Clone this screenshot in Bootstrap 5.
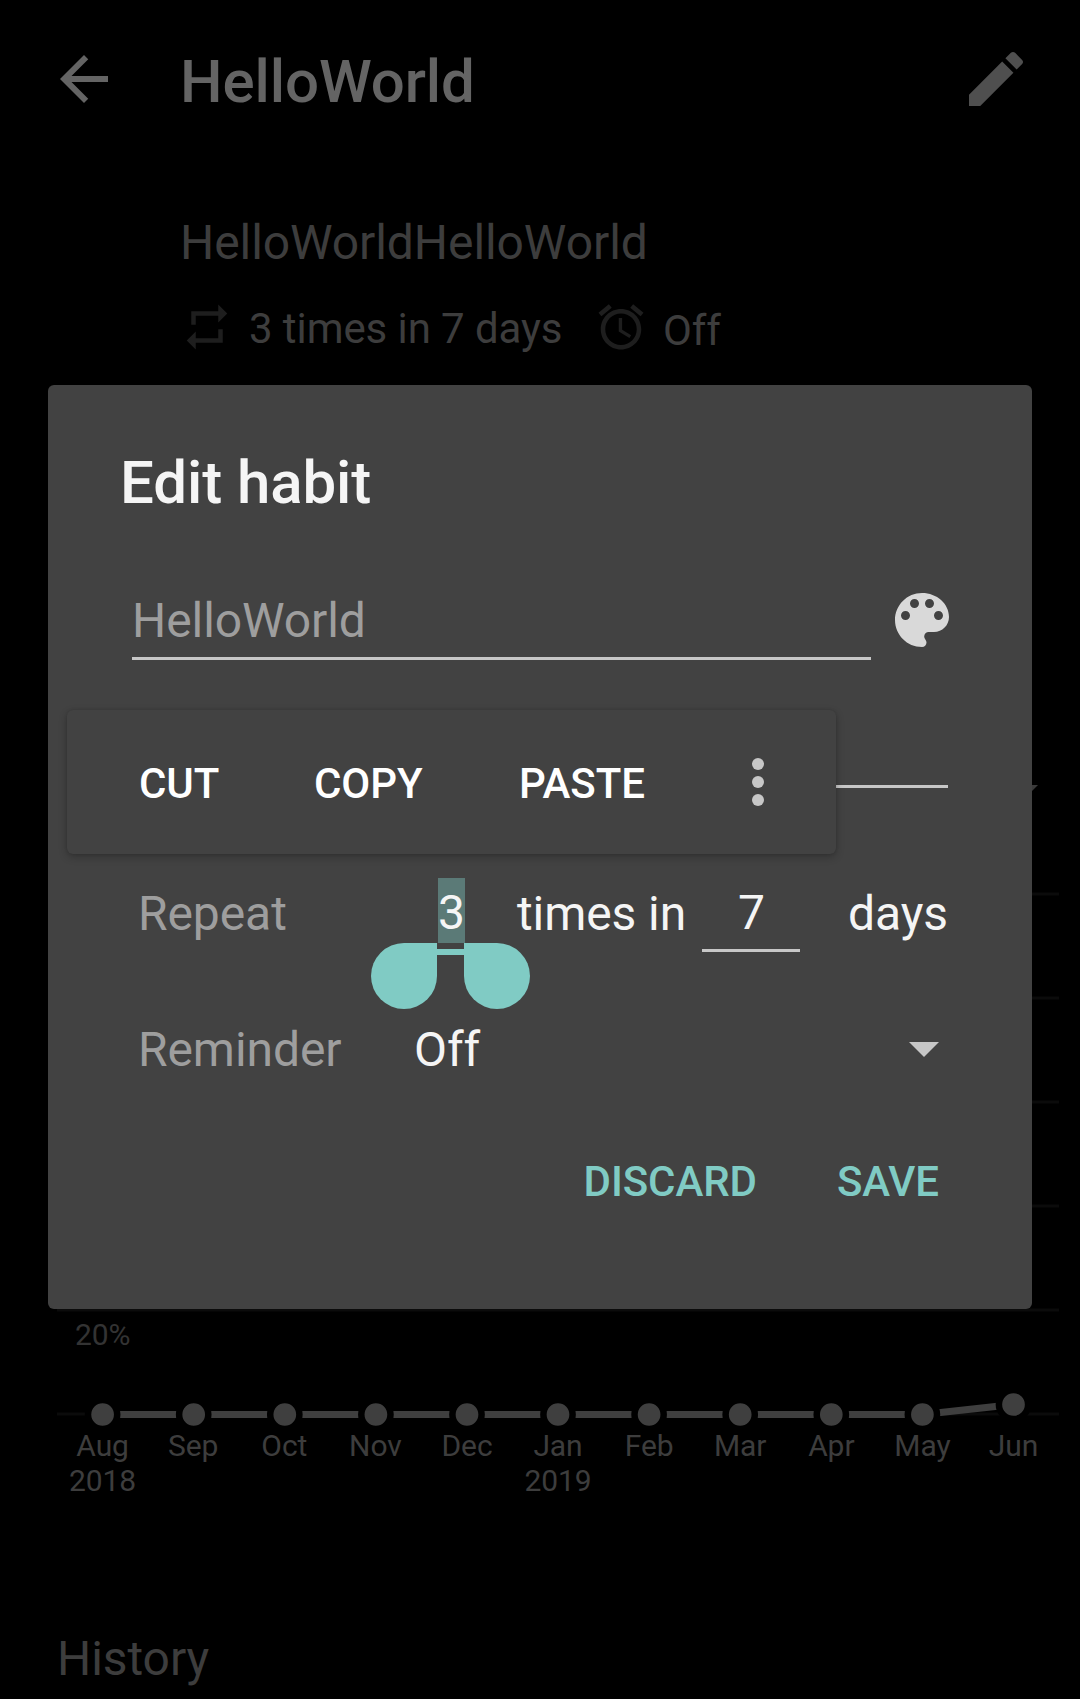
<!DOCTYPE html>
<html lang="en">
<head>
<meta charset="utf-8">
<meta name="viewport" content="width=device-width, initial-scale=1">
<title>Edit habit</title>
<link href="https://cdn.jsdelivr.net/npm/bootstrap@5.3.0/dist/css/bootstrap.min.css" rel="stylesheet">
<script src="https://cdn.jsdelivr.net/npm/bootstrap@5.3.0/dist/js/bootstrap.bundle.min.js"></script>
<style>
body { background: #000; font-family: Roboto, sans-serif; font-size: 48px; letter-spacing: -.08px; color: #3d3d3d; }
.screen { width: 1080px; height: 1699px; background: #000; }
svg { display: block; flex: none; }
.topbar { padding: 43px 48px 0; height: 120px; }
.topbar h1 { font-size: 60px; font-weight: 500; line-height: 77px; color: #646464; margin-left: 60px; }
.about { margin: 94px 0 0 180px; line-height: 57px; }
.meta { margin: 29px 0 0 180px; height: 54px; font-size: 42px; line-height: 57px; white-space: nowrap; }
.meta .freq { margin: 0 31px 0 15px; width: 314px; }
.meta .remind { margin-left: 15px; line-height: 61px; }
.score { margin-top: 346px; }
.score text { font-size: 30px; fill: #3d3d3d; }
.history { margin: 131px 0 0 57px; line-height: 56px; font-size: 48px; font-weight: 400; }

.dialog { left: 48px; top: 385px; width: 984px; height: 924px; padding: 62px 84px 0; border-radius: 6px; background: #424242; color: #f5f5f5; }
.dialog h2 { margin-left: -12px; font-size: 60px; font-weight: 500; line-height: 71px; }
.line-input { border-bottom: 3px solid #c7c7c7; }
.name-row { margin: 66px -10px 0 0; }
.name-input { width: 739px; height: 76px; line-height: 73px; color: #9e9e9e; margin-right: 15px; }
.question-input { height: 128px; }
.form-line { margin-left: 6px; line-height: 71px; white-space: nowrap; }
.repeat-line { margin-top: 90px; height: 74px; }
.reminder-line { margin-top: 62px; height: 71px; }
.reminder-line svg { margin-right: 9px; }
.caption-lbl { color: #9e9e9e; }
.repeat-line .caption-lbl { width: 264px; }
.reminder-line .caption-lbl { width: 276px; }
.num { width: 98px; height: 74px; line-height: 69px; }
.num.focused { width: 99px; height: 77px; border-bottom: 6px solid #80cbc4; }
.num.line-input { padding-left: 1px; }
.picked { width: 27px; height: 65px; background: #5b7a77; }
.handle { top: 65px; width: 66px; height: 66px; background: #80cbc4; }
.handle-l { left: -31px; border-radius: 50% 0 50% 50%; }
.handle-r { left: 62px; border-radius: 0 50% 50% 50%; }
.times { width: 185px; margin-left: 16px; }
.days { margin-left: 48px; }
.actions { margin: 61px 9px 0 0; gap: 80px; font-size: 42px; font-weight: 500; line-height: 71px; color: #80cbc4; }
.clip-menu { left: 19px; top: 325px; width: 769px; height: 144px; padding-left: 72px; border-radius: 6px; background: #424242; color: #fff; font-size: 42px; font-weight: 500; line-height: 147px; box-shadow: 0 3px 8px rgba(0,0,0,.24), 0 0 3px rgba(0,0,0,.14); }
.clip-menu span:nth-child(1) { width: 175px; }
.clip-menu span:nth-child(2) { width: 205px; }
.clip-menu span:nth-child(3) { width: 203px; }
</style>
</head>
<body>
<div class="screen position-relative overflow-hidden">
  <header class="topbar d-flex align-items-start">
    <svg width="72" height="72" viewBox="0 0 24 24" fill="#646464"><path d="M20 11H7.83l5.59-5.59L12 4l-8 8 8 8 1.41-1.41L7.83 13H20v-2z"/></svg>
    <h1 class="mb-0">HelloWorld</h1>
    <svg class="ms-auto" width="72" height="72" viewBox="0 0 24 24" fill="#4f4f4f"><path d="M3 17.25V21h3.75L17.81 9.94l-3.75-3.75L3 17.25zM20.71 7.04c.39-.39.39-1.02 0-1.41l-2.34-2.34c-.39-.39-1.02-.39-1.41 0l-1.83 1.83 3.75 3.75 1.83-1.83z"/></svg>
  </header>
  <main>
    <div class="about">HelloWorldHelloWorld</div>
    <div class="meta d-flex align-items-start">
      <svg width="54" height="54" viewBox="0 0 24 24" fill="#1e1e1e"><path d="M7 7h10v3l4-4-4-4v3H5v6h2V7zm10 10H7v-3l-4 4 4 4v-3h12v-6h-2v4z"/></svg>
      <span class="freq">3 times in 7 days</span>
      <svg width="54" height="54" viewBox="0 0 24 24" fill="#1e1e1e"><path d="M22 5.72l-4.6-3.86-1.29 1.53 4.6 3.86L22 5.72zM7.88 3.39L6.6 1.86 2 5.71l1.29 1.53 4.59-3.85zM12.5 8H11v6l4.75 2.85.75-1.23-4-2.37V8zM12 4c-4.97 0-9 4.03-9 9s4.02 9 9 9c4.97 0 9-4.03 9-9s-4.03-9-9-9zm0 16c-3.87 0-7-3.13-7-7s3.13-7 7-7 7 3.13 7 7-3.13 7-7 7z"/></svg>
      <span class="remind">Off</span>
    </div>
    <svg class="score" width="1080" height="800" viewBox="0 700 1080 800">
      <path d="M1008 785h30l-15 15z" fill="#3a3a3a"/>
      <path d="M57 894H1059M57 998H1059M57 1102H1059M57 1206H1059M57 1310H1059M57 1414H1059" stroke="#0b0b0b" stroke-width="3"/>
      <path d="M102.6 1414.5H922.5L1013.5 1404.5" stroke="#3f3f3f" stroke-width="7" fill="none"/>
      <g fill="#3f3f3f" stroke="#000" stroke-width="6.5">
        <circle cx="102.6" cy="1414.5" r="14.6"/><circle cx="193.7" cy="1414.5" r="14.6"/><circle cx="284.8" cy="1414.5" r="14.6"/><circle cx="375.9" cy="1414.5" r="14.6"/><circle cx="467" cy="1414.5" r="14.6"/><circle cx="558" cy="1414.5" r="14.6"/><circle cx="649.1" cy="1414.5" r="14.6"/><circle cx="740.2" cy="1414.5" r="14.6"/><circle cx="831.3" cy="1414.5" r="14.6"/><circle cx="922.4" cy="1414.5" r="14.6"/><circle cx="1013.5" cy="1404.5" r="14.6"/>
      </g>
      <text x="75" y="1345" style="fill:#333">20%</text>
      <g text-anchor="middle">
        <text x="102.6" y="1456">Aug</text><text x="193.2" y="1456">Sep</text><text x="284.3" y="1456">Oct</text><text x="375.4" y="1456">Nov</text><text x="467" y="1456">Dec</text><text x="558" y="1456">Jan</text><text x="649.1" y="1456">Feb</text><text x="740.2" y="1456">Mar</text><text x="831.3" y="1456">Apr</text><text x="922.4" y="1456">May</text><text x="1013.5" y="1456">Jun</text>
        <text x="102.6" y="1491">2018</text><text x="558" y="1491">2019</text>
      </g>
    </svg>
    <h3 class="history">History</h3>
  </main>

  <section class="dialog position-absolute" role="dialog">
    <h2 class="mb-0">Edit habit</h2>
    <div class="name-row d-flex align-items-start">
      <div class="line-input name-input">HelloWorld</div>
      <svg width="72" height="72" viewBox="0 0 24 24" fill="#d9d9d9"><path d="M12 3c-4.97 0-9 4.03-9 9s4.03 9 9 9c.83 0 1.5-.67 1.5-1.5 0-.39-.15-.74-.39-1.01-.23-.26-.38-.61-.38-.99 0-.83.67-1.5 1.5-1.5H16c2.76 0 5-2.24 5-5 0-4.42-4.03-8-9-8zm-5.5 9c-.83 0-1.5-.67-1.5-1.5S5.67 9 6.5 9 8 9.67 8 10.5 7.33 12 6.5 12zm3-4C8.67 8 8 7.33 8 6.5S8.67 5 9.5 5s1.5.67 1.5 1.5S10.33 8 9.5 8zm5 0c-.83 0-1.5-.67-1.5-1.5S13.67 5 14.5 5s1.5.67 1.5 1.5S15.33 8 14.5 8zm3 4c-.83 0-1.5-.67-1.5-1.5S16.67 9 17.5 9s1.5.67 1.5 1.5-.67 1.5-1.5 1.5z"/></svg>
    </div>
    <div class="line-input question-input"></div>
    <div class="form-line repeat-line d-flex align-items-start">
      <span class="caption-lbl">Repeat</span>
      <div class="num focused position-relative">
        <div class="picked mx-auto">3</div>
        <i class="handle handle-l position-absolute"></i>
        <i class="handle handle-r position-absolute"></i>
      </div>
      <span class="times">times in</span>
      <div class="num line-input text-center">7</div>
      <span class="days">days</span>
    </div>
    <div class="form-line reminder-line d-flex align-items-center">
      <span class="caption-lbl">Reminder</span>
      <span>Off</span>
      <svg class="ms-auto" width="30" height="15" viewBox="0 0 30 15" fill="#c7c7c7"><path d="M0 0h30L15 15z"/></svg>
    </div>
    <div class="actions d-flex justify-content-end"><span>DISCARD</span><span>SAVE</span></div>

    <div class="clip-menu d-flex position-absolute">
      <span>CUT</span><span>COPY</span><span>PASTE</span>
      <svg width="72" height="144" viewBox="0 0 72 144" fill="#c7c7c7"><circle cx="36" cy="54" r="6"/><circle cx="36" cy="72" r="6"/><circle cx="36" cy="90" r="6"/></svg>
    </div>
  </section>
</div>
</body>
</html>
